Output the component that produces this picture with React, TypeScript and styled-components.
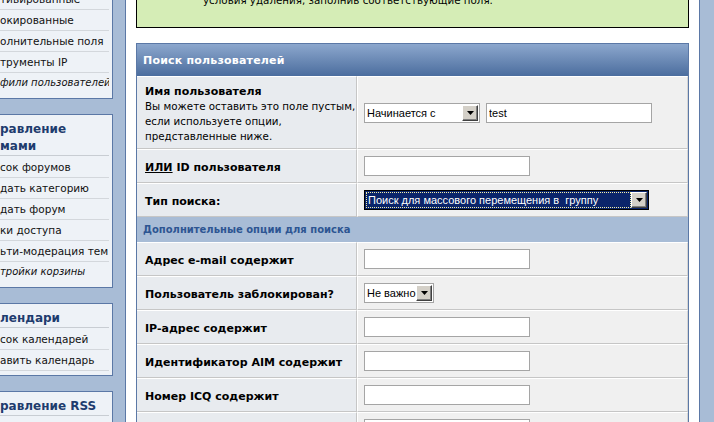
import React from "react";
import styled, { createGlobalStyle } from "styled-components";

const GlobalStyle = createGlobalStyle`
  html, body { margin: 0; padding: 0; }
  body {
    background: #a8bcd6;
    font-family: "DejaVu Sans", Verdana, sans-serif;
    font-size: 11px;
    color: #000;
    overflow: hidden;
  }
`;

const Page = styled.div`
  display: flex;
  width: 714px;
  height: 422px;
  overflow: hidden;
  background: #a8bcd6;
`;

/* ---------- sidebar ---------- */

const Sidebar = styled.nav`
  width: 125px;
  flex-shrink: 0;
  box-sizing: border-box;
  padding-right: 12px;
  display: flex;
  flex-direction: column;
  gap: 15px;
`;

const Box = styled.section<{ $first?: boolean }>`
  margin-top: ${(p) => (p.$first ? "-12px" : "0")};
  background: #eef2f7;
  border: 1px solid #5b78a6;
  border-left: none;
  padding-bottom: 4px;
`;

const BoxTitle = styled.h3`
  margin: 0 3px 1px 0;
  padding: 6px 0 0 0;
  font-size: 12px;
  line-height: 17px;
  font-weight: bold;
  color: #1e3c6e;
  white-space: nowrap;
  overflow: hidden;
  border-bottom: 1px solid #c8cdd3;
`;

const Item = styled.div<{ $italic?: boolean }>`
  height: 20px;
  line-height: 20px;
  margin-right: 3px;
  font-size: ${(p) => (p.$italic ? "10px" : "10.5px")};
  white-space: nowrap;
  overflow: hidden;
  color: #111;
  font-style: ${(p) => (p.$italic ? "italic" : "normal")};
  border-bottom: 1px solid ${(p) => (p.$italic ? "transparent" : "#d3d7dc")};
`;

/* ---------- main column ---------- */

const Main = styled.main`
  width: 575px;
  flex-shrink: 0;
  box-sizing: border-box;
  background: #fff;
  border-left: 1px solid #5b78a6;
  border-right: 1px solid #5b78a6;
  padding: 0 10px;
`;

const Notice = styled.div`
  margin-top: -20px;
  background: #d5edb6;
  border: 1px solid #000;
  padding: 12px 10px 20px 66px;
  line-height: 14px;
  font-size: 10.3px;
  white-space: nowrap;
`;

const Panel = styled.div`
  margin-top: 15px;
  border: 1px solid #5b78a6;
`;

const PanelHeader = styled.div`
  height: 32px;
  display: flex;
  align-items: center;
  padding-left: 6px;
  background: linear-gradient(#8ca7cd, #4b6d9e);
  color: #fff;
  font-weight: bold;
  font-size: 11px;
  letter-spacing: 0.2px;
`;

const SubHeader = styled.div`
  height: 25px;
  line-height: 25px;
  padding-left: 6px;
  background: #a8bcd6;
  color: #2d5592;
  font-weight: bold;
  font-size: 10px;
`;

const Row = styled.div`
  display: grid;
  grid-template-columns: 220px 1fr;
`;

const LabelCell = styled.div`
  box-sizing: border-box;
  background: #e8ebef;
  border-top: 1px solid #fff;
  border-bottom: 1px solid #c6c6c6;
  border-right: 1px solid #c6c6c6;
  padding: 7px 6px 4px 8px;
  display: flex;
  flex-direction: column;
  justify-content: center;
  line-height: 15px;
  white-space: nowrap;
`;

const LabelTitle = styled.span`
  font-weight: bold;
`;

const Hint = styled.span`
  font-weight: normal;
  font-size: 10.3px;
`;

const FieldCell = styled.div`
  box-sizing: border-box;
  background: #f0f0f0;
  border-top: 1px solid #fff;
  border-bottom: 1px solid #c6c6c6;
  border-left: 1px solid #fff;
  border-right: 1px solid #d4d4d4;
  padding: 6px 6px;
  display: flex;
  align-items: center;
  gap: 6px;
`;

const TextInput = styled.input<{ $w: number }>`
  width: ${(p) => p.$w}px;
  height: 20px;
  box-sizing: border-box;
  margin: 0;
  border: 1px solid #a5a5a5;
  background: #fff;
  padding: 0 2px;
  font-family: "Liberation Sans", Arial, sans-serif;
  font-size: 11px;
  color: #000;
  outline: none;
`;

const Select = styled.div<{ $w: number; $focused?: boolean }>`
  width: ${(p) => p.$w}px;
  height: 20px;
  box-sizing: border-box;
  display: flex;
  align-items: stretch;
  padding: 1px;
  border: 1px solid ${(p) => (p.$focused ? "#000" : "#a5a5a5")};
  background: ${(p) => (p.$focused ? "#0a246a" : "#fff")};
  color: ${(p) => (p.$focused ? "#fff" : "#000")};
  font-family: "Liberation Sans", Arial, sans-serif;
  font-size: 11px;
`;

const SelectValue = styled.span<{ $focused?: boolean }>`
  flex: 1;
  min-width: 0;
  display: flex;
  align-items: center;
  padding-left: 1px;
  white-space: pre;
  overflow: visible;
  border: ${(p) => (p.$focused ? "1px dotted #f4f0a8" : "none")};
`;

const ArrowButton = styled.span`
  position: relative;
  z-index: 1;
  width: 16px;
  flex-shrink: 0;
  box-sizing: border-box;
  background: #d4d0c8;
  border: 1px solid;
  border-color: #fff #404040 #404040 #fff;
  box-shadow: inset -1px -1px 0 #808080;
  display: flex;
  align-items: center;
  justify-content: center;
`;

const Arrow = () => (
  <svg width="7" height="4" viewBox="0 0 7 4">
    <polygon points="0,0 7,0 3.5,4" fill="#000" />
  </svg>
);

const DropDown = ({ w, value, focused }: { w: number; value: string; focused?: boolean }) => (
  <Select $w={w} $focused={focused}>
    <SelectValue $focused={focused}>{value}</SelectValue>
    <ArrowButton>
      <Arrow />
    </ArrowButton>
  </Select>
);

const Spacer = styled.div`
  flex: 1;
`;

const simpleRows = [
  "Адрес e-mail содержит",
  "Пользователь заблокирован?",
  "IP-адрес содержит",
  "Идентификатор AIM содержит",
  "Номер ICQ содержит",
  "Идентификатор Yahoo содержит",
];

export default function App() {
  return (
    <>
      <GlobalStyle />
      <Page>
        <Sidebar>
          <Box $first>
            <Item>тивированные</Item>
            <Item>окированные</Item>
            <Item>олнительные поля</Item>
            <Item>трументы IP</Item>
            <Item $italic>фили пользователей</Item>
          </Box>
          <Box>
            <BoxTitle>
              равление
              <br />
              мами
            </BoxTitle>
            <Item>сок форумов</Item>
            <Item>дать категорию</Item>
            <Item>дать форум</Item>
            <Item>ки доступа</Item>
            <Item>ьти-модерация тем</Item>
            <Item $italic>тройки корзины</Item>
          </Box>
          <Box>
            <BoxTitle>лендари</BoxTitle>
            <Item>сок календарей</Item>
            <Item>авить календарь</Item>
          </Box>
          <Box>
            <BoxTitle>равление RSS</BoxTitle>
            <Item>&nbsp;</Item>
          </Box>
        </Sidebar>

        <Main>
          <Notice>условия удаления, заполнив соответствующие поля.</Notice>
          <Panel>
            <PanelHeader>Поиск пользователей</PanelHeader>
            <Row>
              <LabelCell>
                <LabelTitle>Имя пользователя</LabelTitle>
                <Hint>Вы можете оставить это поле пустым,</Hint>
                <Hint>если используете опции,</Hint>
                <Hint>представленные ниже.</Hint>
              </LabelCell>
              <FieldCell>
                <DropDown w={116} value="Начинается с" />
                <TextInput $w={166} defaultValue="test" readOnly />
              </FieldCell>
            </Row>
            <Row>
              <LabelCell>
                <LabelTitle>
                  <u>ИЛИ</u> ID пользователя
                </LabelTitle>
              </LabelCell>
              <FieldCell>
                <TextInput $w={166} readOnly />
              </FieldCell>
            </Row>
            <Row>
              <LabelCell>
                <LabelTitle>Тип поиска:</LabelTitle>
              </LabelCell>
              <FieldCell>
                <DropDown w={285} value="Поиск для массового перемещения в  группу" focused />
              </FieldCell>
            </Row>
            <SubHeader>Дополнительные опции для поиска</SubHeader>
            {simpleRows.map((label, i) => (
              <Row key={label}>
                <LabelCell>
                  <LabelTitle>{label}</LabelTitle>
                </LabelCell>
                <FieldCell>
                  {i === 1 ? (
                    <DropDown w={70} value="Не важно" />
                  ) : (
                    <TextInput $w={166} readOnly />
                  )}
                </FieldCell>
              </Row>
            ))}
          </Panel>
        </Main>
        <Spacer />
      </Page>
    </>
  );
}
